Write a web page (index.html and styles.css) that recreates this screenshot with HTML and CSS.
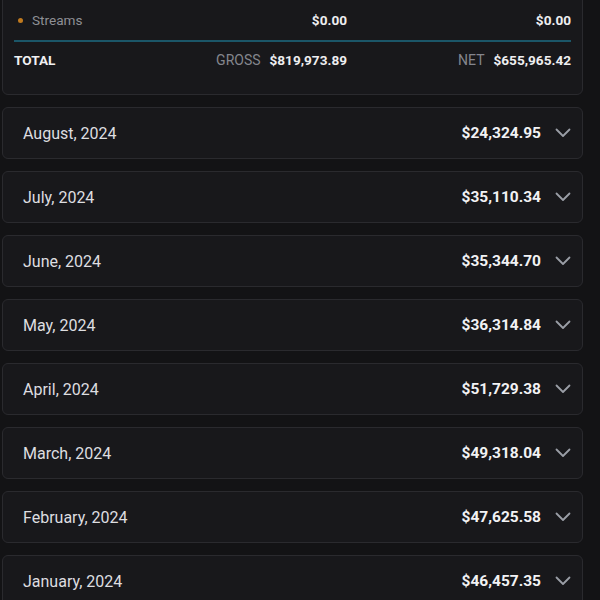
FILE: index.html
```html
<!DOCTYPE html>
<html>
<head>
<meta charset="utf-8">
<link rel="stylesheet" href="styles.css">
</head>
<body>
<div class="page">
  <section class="summary">
    <div class="row streams">
      <div class="label"><span class="dot"></span>Streams</div>
      <div class="val">$0.00</div>
      <div class="val">$0.00</div>
    </div>
    <div class="row total">
      <div class="label total-label">TOTAL</div>
      <div class="val"><span class="key">GROSS</span>$819,973.89</div>
      <div class="val"><span class="key">NET</span>$655,965.42</div>
    </div>
  </section>

  <div class="month"><span class="name">August, 2024</span><span class="amt">$24,324.95</span><svg class="chev" viewBox="0 0 16 10"><path d="M1.5 1.5l6.5 6.5 6.5-6.5"/></svg></div>
  <div class="month"><span class="name">July, 2024</span><span class="amt">$35,110.34</span><svg class="chev" viewBox="0 0 16 10"><path d="M1.5 1.5l6.5 6.5 6.5-6.5"/></svg></div>
  <div class="month"><span class="name">June, 2024</span><span class="amt">$35,344.70</span><svg class="chev" viewBox="0 0 16 10"><path d="M1.5 1.5l6.5 6.5 6.5-6.5"/></svg></div>
  <div class="month"><span class="name">May, 2024</span><span class="amt">$36,314.84</span><svg class="chev" viewBox="0 0 16 10"><path d="M1.5 1.5l6.5 6.5 6.5-6.5"/></svg></div>
  <div class="month"><span class="name">April, 2024</span><span class="amt">$51,729.38</span><svg class="chev" viewBox="0 0 16 10"><path d="M1.5 1.5l6.5 6.5 6.5-6.5"/></svg></div>
  <div class="month"><span class="name">March, 2024</span><span class="amt">$49,318.04</span><svg class="chev" viewBox="0 0 16 10"><path d="M1.5 1.5l6.5 6.5 6.5-6.5"/></svg></div>
  <div class="month"><span class="name">February, 2024</span><span class="amt">$47,625.58</span><svg class="chev" viewBox="0 0 16 10"><path d="M1.5 1.5l6.5 6.5 6.5-6.5"/></svg></div>
  <div class="month"><span class="name">January, 2024</span><span class="amt">$46,457.35</span><svg class="chev" viewBox="0 0 16 10"><path d="M1.5 1.5l6.5 6.5 6.5-6.5"/></svg></div>
</div>
</body>
</html>
```
FILE: styles.css
```css
html, body {
  margin: 0;
  padding: 0;
  background: #131315;
  height: 100%;
  overflow: hidden;
}
body {
  font-family: Roboto, "Liberation Sans", sans-serif;
  color: #e4e4e6;
}
.page {
  display: flex;
  flex-direction: column;
  gap: 12px;
  padding: 0 17px 0 2px;
}
.summary {
  margin-top: -30px;
  padding: 35px 11px 16px;
  background: #18181b;
  border: 1px solid #2a2a2e;
  border-radius: 6px;
}
.row {
  display: grid;
  grid-template-columns: 1fr 190px 224px;
  align-items: center;
  font-size: 13.6px;
}
.streams {
  height: 28px;
  padding-bottom: 6px;
  border-bottom: 2px solid #1b5668;
}
.total {
  height: 36px;
}
.label {
  display: flex;
  align-items: center;
  color: #8e8f95;
}
.dot {
  width: 5px;
  height: 5px;
  border-radius: 50%;
  background: #c07a1f;
  margin: 0 9px 0 4px;
}
.total-label {
  color: #f0f0f2;
  font-weight: 700;
}
.val {
  text-align: right;
  font-weight: 700;
  color: #eeeef0;
}
.key {
  font-weight: 400;
  font-size: 14px;
  color: #84868d;
  margin-right: 9px;
}
.month {
  display: flex;
  align-items: center;
  height: 50px;
  padding: 0 11px 0 20px;
  background: #18181b;
  border: 1px solid #2a2a2e;
  border-radius: 6px;
  font-size: 16px;
}
.name {
  flex: 1;
  color: #dedee0;
}
.amt {
  font-weight: 700;
  font-size: 15.5px;
  color: #f2f2f4;
  margin-right: 14px;
}
.chev {
  width: 16px;
  height: 10px;
  fill: none;
  stroke: #9a9ea6;
  stroke-width: 1.8;
  stroke-linecap: round;
  stroke-linejoin: round;
}
```
